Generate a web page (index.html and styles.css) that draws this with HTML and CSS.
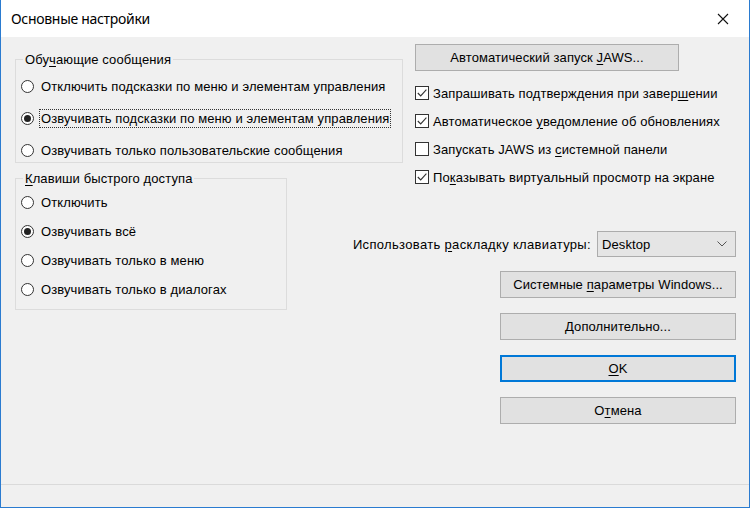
FILE: index.html
```html
<!DOCTYPE html>
<html lang="ru">
<head>
<meta charset="utf-8">
<title>Основные настройки</title>
<link rel="stylesheet" href="styles.css">
</head>
<body>
<div class="window">
  <div class="titlebar">
    <span class="title">Основные настройки</span>
    <span class="close">
      <svg width="12" height="12" viewBox="0 0 12 12"><path d="M1 1 L11 11 M11 1 L1 11" stroke="#111" stroke-width="1.1" fill="none"/></svg>
    </span>
  </div>
  <div class="content">
    <div class="left">
      <fieldset class="group g1">
        <legend>Обу<u>ч</u>ающие сообщения</legend>
        <div class="radio"><span class="dot"></span><span class="lbl">Отключить подсказки по меню и элементам управления</span></div>
        <div class="radio"><span class="dot on"></span><span class="lbl focus">Озвучивать подсказки по меню и элементам управления</span></div>
        <div class="radio"><span class="dot"></span><span class="lbl">Озвучивать только пользовательские сообщения</span></div>
      </fieldset>
      <fieldset class="group g2">
        <legend><u>К</u>лавиши быстрого доступа</legend>
        <div class="radio"><span class="dot"></span><span class="lbl">Отключить</span></div>
        <div class="radio"><span class="dot on"></span><span class="lbl">Озвучивать всё</span></div>
        <div class="radio"><span class="dot"></span><span class="lbl">Озвучивать только в меню</span></div>
        <div class="radio"><span class="dot"></span><span class="lbl">Озвучивать только в диалогах</span></div>
      </fieldset>
    </div>
    <div class="right">
      <div class="btn btn-auto"><span>Автоматический запуск <u>J</u>AWS...</span></div>
      <div class="checks">
        <div class="check"><span class="box"><svg width="12" height="12" viewBox="0 0 12 12"><path d="M1.8 6 L4.7 8.9 L10.4 2.6" stroke="#333" stroke-width="1.1" fill="none"/></svg></span><span class="lbl">Запрашивать подтверждения при завер<u>ш</u>ении</span></div>
        <div class="check"><span class="box"><svg width="12" height="12" viewBox="0 0 12 12"><path d="M1.8 6 L4.7 8.9 L10.4 2.6" stroke="#333" stroke-width="1.1" fill="none"/></svg></span><span class="lbl">Автоматическое <u>у</u>ведомление об обновлениях</span></div>
        <div class="check"><span class="box"></span><span class="lbl">Запускать JAWS из <u>с</u>истемной панели</span></div>
        <div class="check"><span class="box"><svg width="12" height="12" viewBox="0 0 12 12"><path d="M1.8 6 L4.7 8.9 L10.4 2.6" stroke="#333" stroke-width="1.1" fill="none"/></svg></span><span class="lbl">По<u>к</u>азывать виртуальный просмотр на экране</span></div>
      </div>
      <div class="select-row">
        <span class="select-label">Использовать <u>р</u>аскладку клавиатуры:</span>
        <div class="select">
          <span>Desktop</span>
          <svg width="10" height="6" viewBox="0 0 10 6"><path d="M0.5 0.5 L5 5 L9.5 0.5" stroke="#555" stroke-width="1" fill="none"/></svg>
        </div>
      </div>
      <div class="actions">
        <div class="btn btn-wide"><span>Системные <u>п</u>араметры Windows...</span></div>
        <div class="btn btn-wide"><span><u>Д</u>ополнительно...</span></div>
        <div class="btn btn-wide btn-default"><span><u>O</u>K</span></div>
        <div class="btn btn-wide"><span>О<u>т</u>мена</span></div>
      </div>
    </div>
  </div>
  <div class="statusbar"></div>
</div>
</body>
</html>
```

FILE: styles.css
```css
* { box-sizing: border-box; }
html, body { margin: 0; padding: 0; }
body {
  width: 750px;
  height: 508px;
  overflow: hidden;
  font-family: "Liberation Sans", Arial, sans-serif;
  font-size: 13px;
  letter-spacing: 0.1px;
  color: #000;
  background: #f0f0f0;
}
u { text-decoration: underline; text-underline-offset: 2px; }

.window {
  width: 750px;
  height: 508px;
  display: flex;
  flex-direction: column;
  border-left: 1px solid #2a7bd0;
  border-right: 1px solid #2a7bd0;
  border-bottom: 1px solid #2a7bd0;
  background: #f0f0f0;
}

.titlebar {
  height: 37px;
  flex: none;
  background: #fff;
  display: flex;
  align-items: center;
  justify-content: space-between;
  padding: 0 20px 0 10px;
}
.title {
  font-family: "Noto Sans", "Open Sans", sans-serif;
  font-size: 14px;
  letter-spacing: -0.3px;
  color: #000;
  padding-bottom: 1px;
}
.close { display: flex; align-items: center; }

.content {
  flex: 1;
  display: flex;
  gap: 12px;
  padding: 0 13px 0 14px;
}

.left {
  width: 388px;
  flex: none;
  padding-top: 15px;
}

.group {
  margin: 0;
  border: 1px solid #dcdcdc;
  padding: 0 0 0 5px;
  min-width: 0;
}
.group legend {
  margin-left: 2px;
  padding: 0 2px;
  line-height: 15px;
}
.g1 { width: 388px; padding-top: 7px; }
.g2 { width: 272px; margin-top: 8px; padding-top: 2px; padding-bottom: 5px; }

.radio {
  display: flex;
  align-items: center;
}
.g1 .radio { height: 24px; }
.g1 .radio + .radio { margin-top: 8px; }
.g2 .radio { height: 29px; }

.dot {
  width: 13px;
  height: 13px;
  border: 1px solid #333;
  border-radius: 50%;
  background: #fff;
  flex: none;
  display: flex;
  align-items: center;
  justify-content: center;
}
.dot.on::after {
  content: "";
  width: 7px;
  height: 7px;
  border-radius: 50%;
  background: #222;
}
.radio .lbl, .check .lbl {
  margin-left: 5px;
  padding: 1px 1px;
  border: 1px dotted transparent;
  white-space: nowrap;
}
.check .lbl { margin-left: 2px; }
.radio .lbl.focus { border-color: #333; }

.right {
  width: 321px;
  flex: none;
  padding-top: 7px;
  display: flex;
  flex-direction: column;
}

.btn {
  height: 27px;
  background: #e1e1e1;
  border: 1px solid #adadad;
  display: flex;
  align-items: center;
  justify-content: center;
  white-space: nowrap;
}
.btn-auto { width: 264px; }

.checks { margin-top: 8px; }
.check {
  height: 28px;
  display: flex;
  align-items: center;
}
.box {
  width: 14px;
  height: 14px;
  border: 1px solid #333;
  background: #fff;
  flex: none;
  display: flex;
  align-items: center;
  justify-content: center;
}

.select-row {
  margin-top: 40px;
  display: flex;
  justify-content: flex-end;
  align-items: center;
  gap: 6px;
}
.select-label { flex: none; white-space: nowrap; padding-top: 1px; letter-spacing: 0.33px; }
.select {
  flex: none;
  width: 139px;
  height: 26px;
  background: #e5e5e5;
  border: 1px solid #acacac;
  display: flex;
  align-items: center;
  justify-content: space-between;
  padding: 0 8px 0 4px;
}

.actions {
  margin-top: 14px;
  display: flex;
  flex-direction: column;
  align-items: flex-end;
  gap: 15px;
}
.btn-wide { width: 236px; }
.btn-default {
  border-color: #0078d7;
  box-shadow: inset 0 0 0 1px #0078d7;
}

.statusbar {
  height: 23px;
  flex: none;
  border-top: 1px solid #dadada;
  background: #f0f0f0;
}
```
